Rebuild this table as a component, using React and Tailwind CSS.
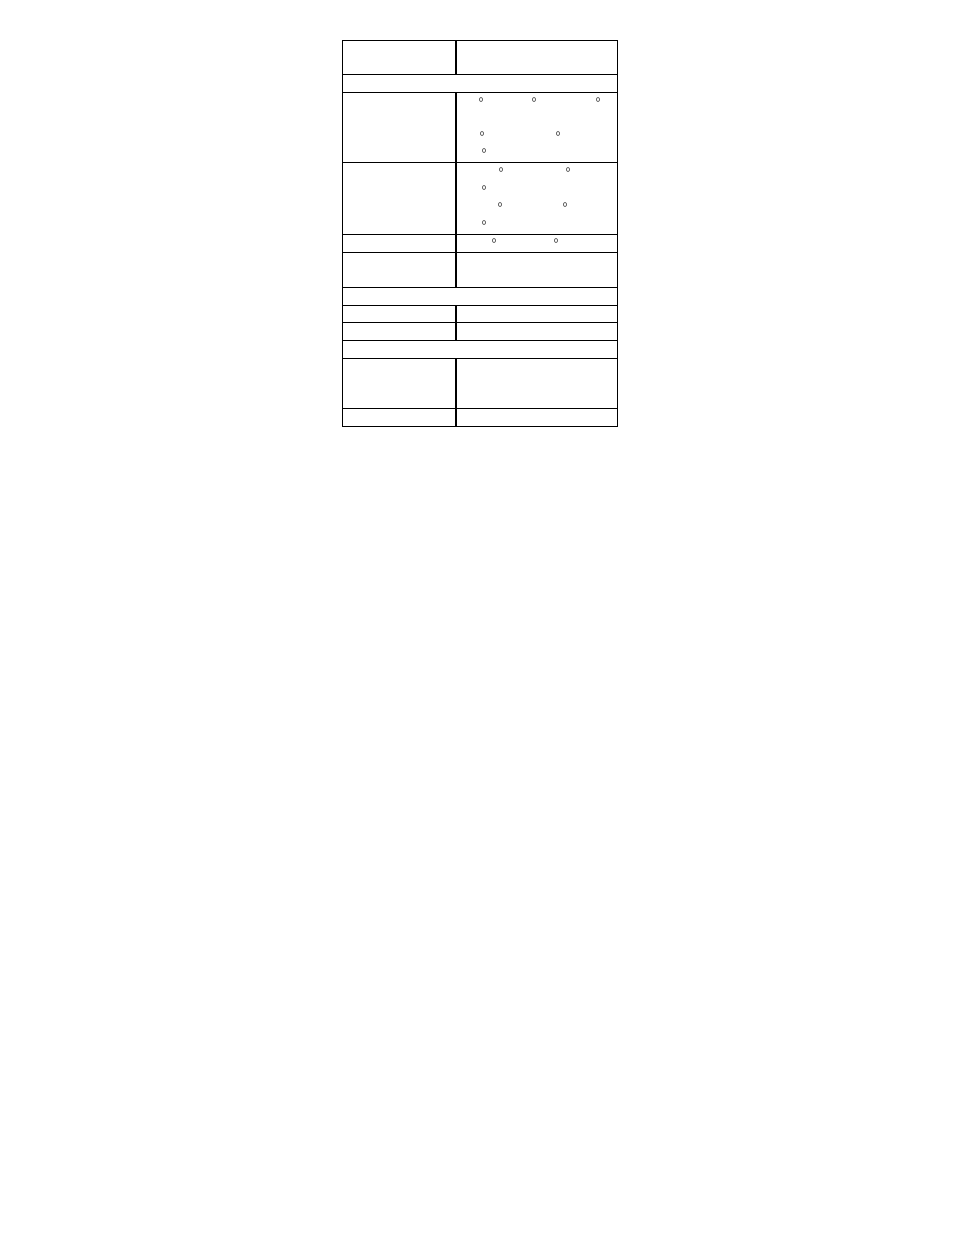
// App.jsx
const dot = "block shrink-0 w-[4px] h-[5px] rounded-full border border-[#666]";

function Row({ h, left, children, span }) {
  if (span) {
    return <div className={`flex border-b border-black ${h}`} />;
  }
  return (
    <div className={`flex border-b border-black ${h}`}>
      <div className="w-[114px] shrink-0 border-r-2 border-black">{left}</div>
      <div className="flex-1 flex flex-col">{children}</div>
    </div>
  );
}

export default function App() {
  return (
    <div className="min-h-[1235px] w-[954px] bg-white font-['Liberation_Sans',Arial,sans-serif] text-[7px] text-black">
      <div className="pt-[40px] pl-[342px]">
        <div className="w-[276px] border-x border-t border-black">
          <Row h="h-[34px]" />
          <Row h="h-[18px]" span />
          <Row h="h-[70px]">
            <div className="flex mt-[4px]">
              <span className={`${dot} ml-[22px]`} />
              <span className={`${dot} ml-[49px]`} />
              <span className={`${dot} ml-[60px]`} />
            </div>
            <div className="flex mt-[29px]">
              <span className={`${dot} ml-[23px]`} />
              <span className={`${dot} ml-[72px]`} />
            </div>
            <div className="flex mt-[12px]">
              <span className={`${dot} ml-[25px]`} />
            </div>
          </Row>
          <Row h="h-[72px]">
            <div className="flex mt-[4px]">
              <span className={`${dot} ml-[42px]`} />
              <span className={`${dot} ml-[63px]`} />
            </div>
            <div className="flex mt-[13px]">
              <span className={`${dot} ml-[25px]`} />
            </div>
            <div className="flex mt-[12px]">
              <span className={`${dot} ml-[41px]`} />
              <span className={`${dot} ml-[61px]`} />
            </div>
            <div className="flex mt-[13px]">
              <span className={`${dot} ml-[25px]`} />
            </div>
          </Row>
          <Row h="h-[18px]">
            <div className="flex mt-[3px]">
              <span className={`${dot} ml-[35px]`} />
              <span className={`${dot} ml-[58px]`} />
            </div>
          </Row>
          <Row h="h-[35px]" />
          <Row h="h-[18px]" span />
          <Row h="h-[17px]" />
          <Row h="h-[18px]" />
          <Row h="h-[18px]" span />
          <Row h="h-[50px]" />
          <Row h="h-[18px]" />
        </div>
      </div>
    </div>
  );
}
